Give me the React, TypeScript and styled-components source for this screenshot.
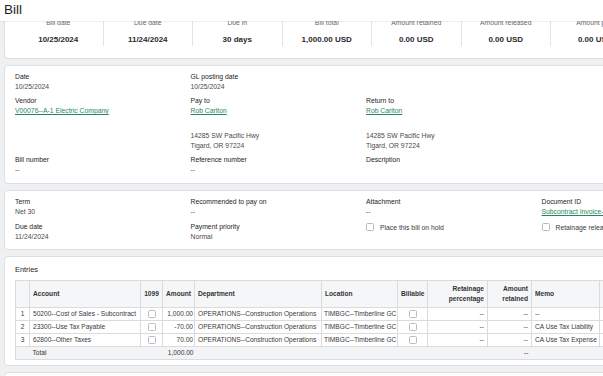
import React from "react";
import styled, { createGlobalStyle } from "styled-components";

const GlobalStyle = createGlobalStyle`
  html, body {
    margin: 0;
    padding: 0;
    background: #eef0f2;
    overflow: hidden;
  }
  body {
    font-family: "Liberation Sans", Arial, sans-serif;
    color: #222;
  }
`;

const Shell = styled.div`
  width: 603px;
  height: 376px;
  overflow: hidden;
  display: flex;
  flex-direction: column;
  background: #eef0f2;
`;

const TitleBar = styled.header`
  flex: none;
  height: 21px;
  padding-left: 4px;
  background: #fff;
  font-size: 13.5px;
  line-height: 19px;
  color: #1c1c1c;
  box-shadow: 0 1px 1px rgba(0, 0, 0, 0.06);
  position: relative;
  z-index: 1;
`;

// the page body is scrolled down a little, so the top of the stats card hides under the title
const Viewport = styled.div`
  flex: 1;
  overflow: hidden;
`;

const Content = styled.div`
  width: 760px;
  margin-top: -11px;
  padding-left: 4px;
  display: flex;
  flex-direction: column;
  gap: 6px;
`;

const Card = styled.section<{ $pt: number; $pb: number; $px?: number }>`
  background: #fff;
  border: 1px solid #dde0e4;
  border-radius: 4px;
  padding: ${(p) => p.$pt}px ${(p) => p.$px ?? 10}px ${(p) => p.$pb}px;
  min-height: 12px;
`;

const StatsRow = styled.div`
  display: flex;
`;

const Stat = styled.div`
  flex: none;
  width: 88.5px;
  text-align: center;
  border-left: 1px solid #e2e5e8;
  &:first-child {
    border-left: none;
  }
`;

const StatLabel = styled.div`
  font-size: 6.8px;
  line-height: 10px;
  color: #6a6a6a;
`;

const StatValue = styled.div`
  margin-top: 6px;
  font-size: 8px;
  line-height: 12px;
  font-weight: 700;
  color: #2a2a2a;
`;

const FieldGrid = styled.div<{ $gap: number }>`
  display: grid;
  grid-template-columns: repeat(4, 175.5px);
  row-gap: ${(p) => p.$gap}px;
  align-items: start;
`;

const Field = styled.div`
  font-size: 6.8px;
  line-height: 10px;
`;

const Label = styled.div`
  color: #1e1e1e;
`;

const Value = styled.div`
  color: #4a4a4a;
  min-height: 10px;
`;

const Link = styled.a`
  color: #1f8a5c;
  text-decoration: underline;
  text-underline-offset: 1px;
  white-space: nowrap;
`;

const Address = styled.div`
  margin-top: 15px;
  color: #4a4a4a;
`;

const CheckRow = styled.label`
  display: flex;
  align-items: center;
  gap: 6px;
  height: 10px;
  font-size: 6.8px;
  color: #3a3a3a;
  white-space: nowrap;
`;

const Box = styled.span`
  flex: none;
  display: inline-block;
  width: 8px;
  height: 8px;
  box-sizing: border-box;
  border: 1px solid #b9bdc2;
  border-radius: 1.5px;
  background: #fff;
`;

const Heading = styled.h2`
  margin: 0 0 4px;
  font-size: 7.4px;
  line-height: 12px;
  font-weight: 400;
  color: #1e1e1e;
`;

const Table = styled.table`
  table-layout: fixed;
  border-collapse: collapse;
  width: 700px;
  font-size: 6.6px;
  color: #3a3a3a;
`;

const Th = styled.th<{ $align: string }>`
  height: 26px;
  padding: 0 3px;
  background: #f5f6f7;
  border: 1px solid #d9dcdf;
  font-weight: 700;
  color: #333;
  line-height: 10px;
  text-align: ${(p) => p.$align};
  white-space: normal;
`;

const Td = styled.td<{ $align: string }>`
  height: 12px;
  padding: 0 3px;
  border: 1px solid #d9dcdf;
  text-align: ${(p) => p.$align};
  white-space: nowrap;
  overflow: hidden;
  line-height: 12px;
`;

const TightTd = styled(Td)`
  padding: 0 1px 0 2px;
`;

const TotalRow = styled.tr`
  background: #f3f4f5;
  & > td {
    border-left: none;
    border-right: none;
    color: #333;
  }
  & > td:first-child {
    border-left: 1px solid #d9dcdf;
  }
`;

const CellBox = styled(Box)`
  vertical-align: middle;
  margin-top: -1px;
`;

type Col = { key: string; title: React.ReactNode; width: number; align: string };

const columns: Col[] = [
  { key: "n", title: "", width: 14, align: "center" },
  { key: "account", title: "Account", width: 111, align: "left" },
  { key: "f1099", title: "1099", width: 22, align: "center" },
  { key: "amount", title: "Amount", width: 32, align: "right" },
  { key: "dept", title: "Department", width: 127, align: "left" },
  { key: "loc", title: "Location", width: 76, align: "left" },
  { key: "billable", title: "Billable", width: 30, align: "center" },
  { key: "retPct", title: "Retainage percentage", width: 60, align: "right" },
  { key: "retAmt", title: "Amount retained", width: 44, align: "right" },
  { key: "memo", title: "Memo", width: 68, align: "left" },
  { key: "more", title: "Project", width: 116, align: "left" },
];

const entries = [
  { n: "1", account: "50200--Cost of Sales - Subcontract", amount: "1,000.00", memo: "--" },
  { n: "2", account: "23300--Use Tax Payable", amount: "-70.00", memo: "CA Use Tax Liability" },
  { n: "3", account: "62800--Other Taxes", amount: "70.00", memo: "CA Use Tax Expense" },
];

const stats = [
  ["Bill date", "10/25/2024"],
  ["Due date", "11/24/2024"],
  ["Due in", "30 days"],
  ["Bill total", "1,000.00 USD"],
  ["Amount retained", "0.00 USD"],
  ["Amount released", "0.00 USD"],
  ["Amount paid", "0.00 USD"],
  ["Amount due", "1,000.00 USD"],
];

export default function App() {
  return (
    <Shell>
      <GlobalStyle />
      <TitleBar>Bill</TitleBar>
      <Viewport>
        <Content>
          <Card $pt={7} $pb={12} $px={9}>
            <StatsRow>
              {stats.map(([label, value]) => (
                <Stat key={label}>
                  <StatLabel>{label}</StatLabel>
                  <StatValue>{value}</StatValue>
                </Stat>
              ))}
            </StatsRow>
          </Card>

          <Card $pt={6} $pb={8}>
            <FieldGrid $gap={4}>
              <Field>
                <Label>Date</Label>
                <Value>10/25/2024</Value>
              </Field>
              <Field>
                <Label>GL posting date</Label>
                <Value>10/25/2024</Value>
              </Field>
              <div />
              <div />
              <Field>
                <Label>Vendor</Label>
                <Value>
                  <Link>V00076--A-1 Electric Company</Link>
                </Value>
              </Field>
              <Field>
                <Label>Pay to</Label>
                <Value>
                  <Link>Rob Carlton</Link>
                </Value>
                <Address>
                  14285 SW Pacific Hwy
                  <br />
                  Tigard, OR 97224
                </Address>
              </Field>
              <Field>
                <Label>Return to</Label>
                <Value>
                  <Link>Rob Carlton</Link>
                </Value>
                <Address>
                  14285 SW Pacific Hwy
                  <br />
                  Tigard, OR 97224
                </Address>
              </Field>
              <div />
              <Field>
                <Label>Bill number</Label>
                <Value>--</Value>
              </Field>
              <Field>
                <Label>Reference number</Label>
                <Value>--</Value>
              </Field>
              <Field>
                <Label>Description</Label>
                <Value />
              </Field>
              <div />
            </FieldGrid>
          </Card>

          <Card $pt={6} $pb={7}>
            <FieldGrid $gap={5}>
              <Field>
                <Label>Term</Label>
                <Value>Net 30</Value>
              </Field>
              <Field>
                <Label>Recommended to pay on</Label>
                <Value>--</Value>
              </Field>
              <Field>
                <Label>Attachment</Label>
                <Value>--</Value>
              </Field>
              <Field>
                <Label>Document ID</Label>
                <Value>
                  <Link>Subcontract Invoice-SCI0041</Link>
                </Value>
              </Field>
              <Field>
                <Label>Due date</Label>
                <Value>11/24/2024</Value>
              </Field>
              <Field>
                <Label>Payment priority</Label>
                <Value>Normal</Value>
              </Field>
              <CheckRow>
                <Box />
                Place this bill on hold
              </CheckRow>
              <CheckRow>
                <Box />
                Retainage release bill
              </CheckRow>
            </FieldGrid>
          </Card>

          <Card $pt={7} $pb={5}>
            <Heading>Entries</Heading>
            <Table>
              <colgroup>
                {columns.map((c) => (
                  <col key={c.key} style={{ width: c.width }} />
                ))}
              </colgroup>
              <thead>
                <tr>
                  {columns.map((c) => (
                    <Th key={c.key} $align={c.align}>
                      {c.title}
                    </Th>
                  ))}
                </tr>
              </thead>
              <tbody>
                {entries.map((e) => (
                  <tr key={e.n}>
                    <Td $align="center">{e.n}</Td>
                    <Td $align="left">{e.account}</Td>
                    <Td $align="center">
                      <CellBox />
                    </Td>
                    <TightTd $align="right">{e.amount}</TightTd>
                    <Td $align="left">OPERATIONS--Construction Operations</Td>
                    <TightTd $align="left">TIMBGC--Timberline GC</TightTd>
                    <Td $align="center">
                      <CellBox />
                    </Td>
                    <Td $align="right">--</Td>
                    <Td $align="right">--</Td>
                    <Td $align="left">{e.memo}</Td>
                    <Td $align="left">--</Td>
                  </tr>
                ))}
                <TotalRow>
                  <Td $align="center" />
                  <Td $align="left">Total</Td>
                  <Td $align="center" />
                  <TightTd $align="right">1,000.00</TightTd>
                  <Td $align="left" />
                  <Td $align="left" />
                  <Td $align="center" />
                  <Td $align="right" />
                  <Td $align="right">--</Td>
                  <Td $align="left" />
                  <Td $align="left" />
                </TotalRow>
              </tbody>
            </Table>
          </Card>

          <Card $pt={6} $pb={6} />
        </Content>
      </Viewport>
    </Shell>
  );
}
